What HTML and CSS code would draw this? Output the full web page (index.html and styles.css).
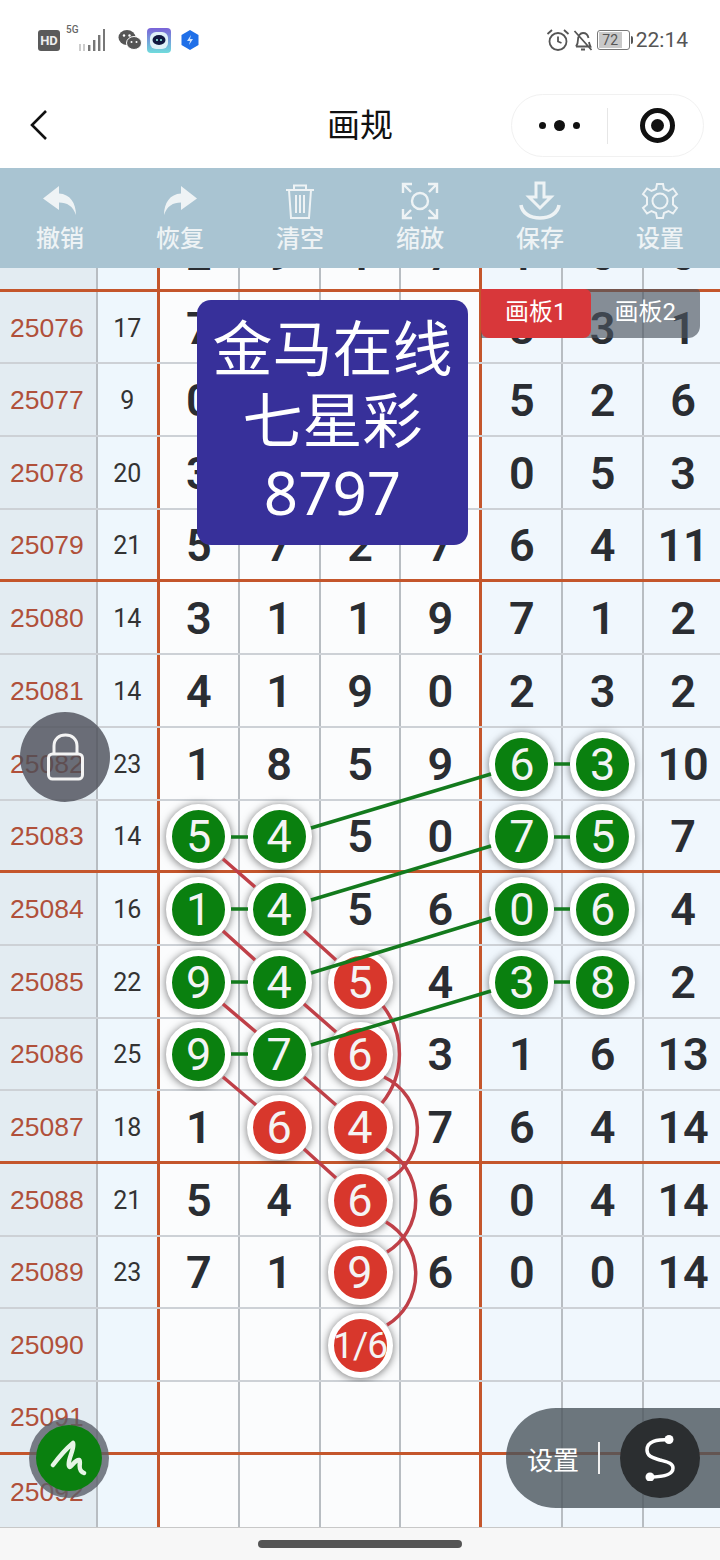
FILE: index.html
```html
<!DOCTYPE html>
<html lang="zh-CN">
<head>
    <meta charset="UTF-8">
    <meta name="viewport" content="width=device-width, initial-scale=1.0">
    <title>画规</title>
    <link rel="stylesheet" href="styles.css">
</head>
<body>
<div class="page">

    <!-- status bar -->
    <div class="status-bar">
        <div class="status-left">
            <span class="hd">HD</span>
            <span class="net">
                <span class="net-label">5G</span>
                <svg width="26" height="24" viewBox="0 0 26 24"><g fill="#777"><rect x="0" y="15" width="2" height="7" fill="#ccc"/><rect x="4" y="15" width="2" height="7" fill="#ccc"/><rect x="9" y="16" width="2.4" height="6"/><rect x="14" y="11" width="2.4" height="11"/><rect x="19" y="6" width="2.4" height="16"/><rect x="24" y="0" width="2" height="22"/></g></svg>
            </span>
            <svg class="wechat" width="24" height="22" viewBox="0 0 24 22"><ellipse cx="9" cy="8.5" rx="8.5" ry="7.5" fill="#555"/><ellipse cx="16" cy="14" rx="7.5" ry="6.5" fill="#555" stroke="#fff"/><circle cx="6" cy="6.5" r="1.2" fill="#fff"/><circle cx="11.500" cy="6.500" r="1.200" fill="#fff"/><circle cx="13.500" cy="13" r="1" fill="#fff"/><circle cx="18.500" cy="13" r="1" fill="#fff"/></svg>
            <svg class="app" width="24" height="25" viewBox="0 0 24 25"><defs><linearGradient id="appbg" x1="0" y1="0" x2="0" y2="1"><stop offset="0" stop-color="#7a62d8"/><stop offset="1" stop-color="#6fdcdc"/></linearGradient></defs><rect width="24" height="25" rx="4" fill="url(#appbg)"/><rect x="3" y="4" width="18" height="17" rx="6" fill="#dff1f8"/><ellipse cx="12" cy="12" rx="6.500" ry="5" fill="#101840"/><circle cx="10" cy="12" r="1" fill="#9fe"/><circle cx="14" cy="12" r="1" fill="#9fe"/></svg>
            <svg class="hex" width="18" height="20" viewBox="0 0 18 20"><path d="M9 0 17.500 5V15L9 20 .5 15V5Z" fill="#1f6fe8"/><path d="M10 5 6 11H9L8 15 12 9H9Z" fill="#cfe4ff"/></svg>
        </div>
        <div class="status-right">
            <svg width="24" height="24" viewBox="0 0 24 24" fill="none" stroke="#555" stroke-width="1.800"><circle cx="12" cy="13.500" r="8.500"/><path d="M12 8.500v5l3.500 1.500M1.500 6 6 2M22.500 6 18 2"/></svg>
            <svg width="22" height="24" viewBox="0 0 22 24" fill="none" stroke="#555" stroke-width="1.800"><path d="M4 18.500c1.500-2 2-3.500 2-7 0-3.500 2-6.500 5-6.500s5 2.500 5.500 5M17 14c.3 2 1 3.300 1.500 4.500H4M9 21.500h4M2.500 3 19.500 22"/></svg>
            <span class="battery"><span class="battery-level">72</span></span>
            <span class="clock">22:14</span>
        </div>
    </div>

    <!-- mini program nav -->
    <div class="nav-bar">
        <svg class="back" width="20" height="32" viewBox="0 0 20 32" fill="none" stroke="#111" stroke-width="2.600"><path d="M17 2 3 16 17 30"/></svg>
        <div class="nav-title">画规</div>
        <div class="capsule">
            <div class="capsule-dots"><i></i><i class="big"></i><i></i></div>
            <div class="capsule-line"></div>
            <div class="capsule-target"><i></i></div>
        </div>
    </div>

    <!-- toolbar -->
    <div class="toolbar">
        <div class="tool">
            <svg width="36" height="32" viewBox="0 0 36 32"><path d="M17 1 1 13.500 17 25V17.500C25 17.500 31 21 34 30 34 18 28 9 17 8.500Z" fill="#eef3f5"/></svg>
            <span>撤销</span>
        </div>
        <div class="tool">
            <svg width="36" height="32" viewBox="0 0 36 32"><path d="M19 1 35 13.500 19 25V17.500C11 17.500 5 21 2 30 2 18 8 9 19 8.500Z" fill="#eef3f5"/></svg>
            <span>恢复</span>
        </div>
        <div class="tool">
            <svg width="36" height="38" viewBox="0 0 36 38" fill="none" stroke="#eef3f5" stroke-width="2"><path d="M4 8H32M12 8V3.500H24V8M7 8 9 36H27L29 8M14 13V31M18 13V31M22 13V31"/></svg>
            <span>清空</span>
        </div>
        <div class="tool">
            <svg width="38" height="38" viewBox="0 0 38 38" fill="none" stroke="#eef3f5" stroke-width="2.400"><circle cx="19" cy="19" r="8"/><path d="M2 11V2H11M2 2 10 10M36 11V2H27M36 2 28 10M2 27V36H11M2 36 10 28M36 27V36H27M36 36 28 28"/></svg>
            <span>缩放</span>
        </div>
        <div class="tool">
            <svg width="42" height="40" viewBox="0 0 42 40" fill="none" stroke="#eef3f5" stroke-width="3"><path d="M17 2H25V16H32L21 27 10 16H17Z"/><path d="M2 24C3 32 11 37 21 37S39 32 40 24" stroke-width="3.600"/></svg>
            <span>保存</span>
        </div>
        <div class="tool">
            <svg width="38" height="38" viewBox="0 0 38 38" fill="none" stroke="#eef3f5" stroke-width="2"><circle cx="19" cy="19" r="7.500"/><path d="M16 2H22L23 7 27.500 9 32 6.500 36 12 32 15.500V22.500L36 26 32 31.500 27.500 29 23 31 22 36H16L15 31 10.500 29 6 31.500 2 26 6 22.500V15.500L2 12 6 6.500 10.500 9 15 7Z"/></svg>
            <span>设置</span>
        </div>
    </div>

    <!-- chart -->
    <div class="chart">
        <div class="rows">
            <div class="row"><div class="period"></div><div class="sum"></div><div class="cell">2</div><div class="cell">9</div><div class="cell">1</div><div class="cell split">7</div><div class="cell blue">1</div><div class="cell blue">5</div><div class="cell blue last">5</div></div>
            <div class="row"><div class="period">25076</div><div class="sum">17</div><div class="cell">7</div><div class="cell">3</div><div class="cell">4</div><div class="cell split">3</div><div class="cell blue">8</div><div class="cell blue">3</div><div class="cell blue last">1</div></div>
            <div class="row"><div class="period">25077</div><div class="sum">9</div><div class="cell">0</div><div class="cell">2</div><div class="cell">4</div><div class="cell split">3</div><div class="cell blue">5</div><div class="cell blue">2</div><div class="cell blue last">6</div></div>
            <div class="row"><div class="period">25078</div><div class="sum">20</div><div class="cell">3</div><div class="cell">8</div><div class="cell">5</div><div class="cell split">4</div><div class="cell blue">0</div><div class="cell blue">5</div><div class="cell blue last">3</div></div>
            <div class="row"><div class="period">25079</div><div class="sum">21</div><div class="cell">5</div><div class="cell">7</div><div class="cell">2</div><div class="cell split">7</div><div class="cell blue">6</div><div class="cell blue">4</div><div class="cell blue last">11</div></div>
            <div class="row"><div class="period">25080</div><div class="sum">14</div><div class="cell">3</div><div class="cell">1</div><div class="cell">1</div><div class="cell split">9</div><div class="cell blue">7</div><div class="cell blue">1</div><div class="cell blue last">2</div></div>
            <div class="row"><div class="period">25081</div><div class="sum">14</div><div class="cell">4</div><div class="cell">1</div><div class="cell">9</div><div class="cell split">0</div><div class="cell blue">2</div><div class="cell blue">3</div><div class="cell blue last">2</div></div>
            <div class="row"><div class="period">25082</div><div class="sum">23</div><div class="cell">1</div><div class="cell">8</div><div class="cell">5</div><div class="cell split">9</div><div class="cell blue"><span class="ball green">6</span></div><div class="cell blue"><span class="ball green">3</span></div><div class="cell blue last">10</div></div>
            <div class="row"><div class="period">25083</div><div class="sum">14</div><div class="cell"><span class="ball green">5</span></div><div class="cell"><span class="ball green">4</span></div><div class="cell">5</div><div class="cell split">0</div><div class="cell blue"><span class="ball green">7</span></div><div class="cell blue"><span class="ball green">5</span></div><div class="cell blue last">7</div></div>
            <div class="row"><div class="period">25084</div><div class="sum">16</div><div class="cell"><span class="ball green">1</span></div><div class="cell"><span class="ball green">4</span></div><div class="cell">5</div><div class="cell split">6</div><div class="cell blue"><span class="ball green">0</span></div><div class="cell blue"><span class="ball green">6</span></div><div class="cell blue last">4</div></div>
            <div class="row"><div class="period">25085</div><div class="sum">22</div><div class="cell"><span class="ball green">9</span></div><div class="cell"><span class="ball green">4</span></div><div class="cell"><span class="ball red">5</span></div><div class="cell split">4</div><div class="cell blue"><span class="ball green">3</span></div><div class="cell blue"><span class="ball green">8</span></div><div class="cell blue last">2</div></div>
            <div class="row"><div class="period">25086</div><div class="sum">25</div><div class="cell"><span class="ball green">9</span></div><div class="cell"><span class="ball green">7</span></div><div class="cell"><span class="ball red">6</span></div><div class="cell split">3</div><div class="cell blue">1</div><div class="cell blue">6</div><div class="cell blue last">13</div></div>
            <div class="row"><div class="period">25087</div><div class="sum">18</div><div class="cell">1</div><div class="cell"><span class="ball red">6</span></div><div class="cell"><span class="ball red">4</span></div><div class="cell split">7</div><div class="cell blue">6</div><div class="cell blue">4</div><div class="cell blue last">14</div></div>
            <div class="row"><div class="period">25088</div><div class="sum">21</div><div class="cell">5</div><div class="cell">4</div><div class="cell"><span class="ball red">6</span></div><div class="cell split">6</div><div class="cell blue">0</div><div class="cell blue">4</div><div class="cell blue last">14</div></div>
            <div class="row"><div class="period">25089</div><div class="sum">23</div><div class="cell">7</div><div class="cell">1</div><div class="cell"><span class="ball red">9</span></div><div class="cell split">6</div><div class="cell blue">0</div><div class="cell blue">0</div><div class="cell blue last">14</div></div>
            <div class="row"><div class="period">25090</div><div class="sum"></div><div class="cell"></div><div class="cell"></div><div class="cell"><span class="ball red small">1/6</span></div><div class="cell split"></div><div class="cell blue"></div><div class="cell blue"></div><div class="cell blue last"></div></div>
            <div class="row"><div class="period">25091</div><div class="sum"></div><div class="cell"></div><div class="cell"></div><div class="cell"></div><div class="cell split"></div><div class="cell blue"></div><div class="cell blue"></div><div class="cell blue last"></div></div>
            <div class="row"><div class="period">25092</div><div class="sum"></div><div class="cell"></div><div class="cell"></div><div class="cell"></div><div class="cell split"></div><div class="cell blue"></div><div class="cell blue"></div><div class="cell blue last"></div></div>
        </div>

        <!-- connecting lines, in page coordinates -->
        <svg class="lines" width="720" height="1259" viewBox="0 268 720 1259" fill="none">
            <g class="red-lines">
                <path d="M223 859 255 887M223 931 255 960M304 931 336 960M223 1004 256 1032M304 1004 336 1032M223 1077 256 1105M304 1077 336 1105M304 1149 336 1178"/>
                <path d="M383 1006A78 78 0 0 1 382 1103"/>
                <path d="M384 1077A58 58 0 0 1 388 1180"/>
                <path d="M386 1149A60 60 0 0 1 387 1252"/>
                <path d="M386 1222A60 60 0 0 1 387 1325"/>
            </g>
            <g class="green-lines">
                <path d="M231 837H248M231 909H248M231 982H248M231 1054H248M554 764H570M554 837H570M554 909H570M554 982H570"/>
                <path d="M311 828 491 774M311 900 491 846M311 973 491 918M311 1045 491 991"/>
            </g>
        </svg>

        <div class="notice">金马在线<br>七星彩<br>8797</div>

        <div class="tabs">
            <div class="tab active">画板1</div>
            <div class="tab">画板2</div>
        </div>

        <div class="lock">
            <svg width="37" height="48" viewBox="0 0 37 48" fill="none" stroke="#f4f4f4" stroke-width="3"><path d="M7 22V13C7 6 12 2 18.500 2S30 6 30 13V22"/><rect x="1.500" y="21" width="34" height="25" rx="4"/></svg>
        </div>

        <div class="pen">
            <div class="pen-inner">
                <svg width="40" height="36" viewBox="0 0 40 36" fill="none" stroke="#e6f5e6" stroke-width="4.500" stroke-linecap="round" stroke-linejoin="round"><path d="M4 25C10 17 18 8 24 3 26 9 18 20 20 26 21 30 26 19 30 20 33 21 27 30 35 33"/></svg>
            </div>
        </div>

        <div class="draw-pill">
            <span>设置</span>
            <div class="pill-line"></div>
            <div class="pill-btn">
                <svg width="36" height="46" viewBox="0 0 36 46" fill="none" stroke="#fff" stroke-width="3.500"><path d="M27 4.500C15 4.500 5 6 5 15 5 22 12 23 18 25 25 27 31 28 31 33 31 40 20 42 8 42"/><circle cx="27" cy="4.500" r="4.500" fill="#fff" stroke="none"/><circle cx="8" cy="42" r="4.500" fill="#fff" stroke="none"/></svg>
            </div>
        </div>
    </div>

    <div class="home-bar"><div class="home-indicator"></div></div>
</div>
</body>
</html>
```
FILE: styles.css
```css
body {
    margin: 0;
    padding: 0;
    background-color: #fff;
    font-family: Roboto, "Noto Sans CJK SC", sans-serif;
}

.page {
    width: 720px;
    height: 1560px;
    display: flex;
    flex-direction: column;
    overflow: hidden;
}

/* status bar */
.status-bar {
    height: 80px;
    padding: 0 32px 0 38px;
    display: flex;
    justify-content: space-between;
    align-items: center;
    color: #555;
}

.status-left,
.status-right {
    display: flex;
    align-items: center;
}

.hd {
    width: 22px;
    height: 21px;
    background-color: #5a5a5a;
    border-radius: 3px;
    color: #eee;
    font-size: 13px;
    font-weight: 700;
    line-height: 21px;
    text-align: center;
}

.net {
    position: relative;
    width: 39px;
    height: 24px;
    margin-left: 6px;
}

.net svg {
    position: absolute;
    right: 0;
    top: 1px;
}

.net-label {
    position: absolute;
    left: 0;
    top: -4px;
    font-size: 10px;
    font-weight: 500;
    color: #666;
}

.wechat {
    margin-left: 13px;
}

.app {
    margin-left: 5px;
}

.hex {
    margin-left: 10px;
}

.status-right svg {
    margin-right: 2px;
}

.battery {
    position: relative;
    width: 31px;
    height: 18px;
    margin-left: 1px;
    border: 1px solid #777;
    border-radius: 3px;
    box-sizing: content-box;
}

.battery::after {
    content: "";
    position: absolute;
    right: -4px;
    top: 5px;
    width: 2px;
    height: 8px;
    background-color: #555;
    border-radius: 0 2px 2px 0;
}

.battery-level {
    display: block;
    width: 23px;
    height: 16px;
    margin: 1px;
    background-color: #c8c8c8;
    font-size: 14px;
    line-height: 16px;
    text-align: center;
    color: #555;
}

.clock {
    margin-left: 6px;
    font-size: 21px;
}

/* nav */
.nav-bar {
    position: relative;
    height: 88px;
    display: flex;
    align-items: center;
    justify-content: center;
}

.back {
    position: absolute;
    left: 29px;
    top: 29px;
}

.nav-title {
    font-size: 33px;
    color: #111;
    margin-top: -3px;
}

.capsule {
    position: absolute;
    left: 511px;
    top: 14px;
    width: 193px;
    height: 63px;
    box-sizing: border-box;
    border: 1px solid #f1f1f1;
    border-radius: 32px;
    display: flex;
    align-items: center;
}

.capsule-dots {
    width: 95px;
    display: flex;
    align-items: center;
    justify-content: center;
    gap: 8px;
}

.capsule-dots i {
    width: 7px;
    height: 7px;
    background-color: #111;
    border-radius: 50%;
}

.capsule-dots i.big {
    width: 11px;
    height: 11px;
}

.capsule-line {
    width: 1px;
    height: 36px;
    background-color: #e6e6e6;
}

.capsule-target {
    width: 35px;
    height: 35px;
    margin-left: 32px;
    box-sizing: border-box;
    border: 5px solid #111;
    border-radius: 50%;
    display: flex;
    align-items: center;
    justify-content: center;
}

.capsule-target i {
    width: 13px;
    height: 13px;
    background-color: #111;
    border-radius: 50%;
}

/* toolbar */
.toolbar {
    height: 100px;
    display: flex;
    background-color: #a9c4d2;
}

.tool {
    width: 120px;
    padding-top: 13px;
    box-sizing: border-box;
    display: flex;
    flex-direction: column;
    align-items: center;
    color: #eef3f5;
    font-size: 24px;
    font-weight: 500;
}

.tool svg {
    height: 40px;
}

.tool span {
    line-height: 34px;
    margin-top: 1px;
}

/* chart */
.chart {
    position: relative;
    flex: none;
    height: 1259px;
    overflow: hidden;
}

.rows {
    margin-top: -49px;
}

.row {
    height: 72.7px;
    box-sizing: border-box;
    display: flex;
    border-bottom: 2px solid #cdd1d6;
}

/* every fourth row closes with the orange line */
.row:nth-child(4n+1) {
    border-bottom: 3px solid #c4562c;
}

.row:last-child {
    border-bottom: none;
}

.period,
.sum,
.cell {
    display: flex;
    align-items: center;
    box-sizing: border-box;
    padding-top: 2px;
}

.period {
    width: 98px;
    padding-left: 10px;
    background-color: #e3ecf2;
    border-right: 2px solid #b8bdc2;
    color: #b0503a;
    font-family: "Liberation Sans", sans-serif;
    font-size: 26.5px;
}

.sum {
    width: 62px;
    justify-content: center;
    background-color: #eef7fd;
    border-right: 3px solid #c4562c;
    color: #333;
    font-size: 25px;
}

.cell {
    width: 81px;
    justify-content: center;
    background-color: #fbfcfd;
    border-right: 2px solid #b8bdc2;
    color: #2a2d32;
    font-size: 45px;
    font-weight: 600;
}

.cell:nth-child(3) {
    width: 80px;
}

.cell.split {
    border-right: 3px solid #c4562c;
}

.cell.blue {
    background-color: #f0f7fd;
}

.cell.last {
    width: 76px;
    padding-left: 2px;
    border-right: none;
}

.ball {
    flex: none;
    width: 65px;
    height: 65px;
    box-sizing: border-box;
    border: 6.5px solid #fff;
    border-radius: 50%;
    display: flex;
    align-items: center;
    justify-content: center;
    box-shadow: 0 1px 8px rgba(0, 0, 0, 0.55);
    color: #f4f4f4;
    font-weight: 400;
    font-size: 45px;
}

.ball.green {
    background-color: #0a800f;
}

.ball.red {
    background-color: #d8372c;
}

.ball.small {
    font-size: 37px;
    letter-spacing: -1px;
}

.lines {
    position: absolute;
    left: 0;
    top: 0;
}

.red-lines {
    stroke: #bf4048;
    stroke-width: 3.500;
}

.green-lines {
    stroke: #137a1d;
    stroke-width: 3.500;
}

/* things lying over the chart */
.notice {
    position: absolute;
    left: 197px;
    top: 32px;
    width: 271px;
    height: 245px;
    box-sizing: border-box;
    padding-top: 12px;
    background-color: #37309a;
    border-radius: 14px;
    color: #fff;
    font-family: "Noto Sans", "Noto Sans CJK SC", sans-serif;
    font-size: 60px;
    line-height: 72px;
    text-align: center;
}

.tabs {
    position: absolute;
    left: 481px;
    top: 21px;
    width: 219px;
    height: 49px;
    display: flex;
    background-color: rgba(75, 85, 95, 0.65);
    border-radius: 0 4px 12px 0;
}

.tab {
    width: 110px;
    color: #fff;
    font-size: 24px;
    line-height: 46px;
    text-align: center;
}

.tab.active {
    background-color: #d8373a;
    border-radius: 0 6px 8px 8px;
}

.lock {
    position: absolute;
    left: 20px;
    top: 444px;
    width: 90px;
    height: 90px;
    background-color: rgba(75, 78, 88, 0.8);
    border-radius: 50%;
    display: flex;
    align-items: center;
    justify-content: center;
}

.pen {
    position: absolute;
    left: 29px;
    top: 1150px;
    width: 80px;
    height: 80px;
    background-color: rgba(90, 95, 105, 0.8);
    border-radius: 50%;
    display: flex;
    align-items: center;
    justify-content: center;
}

.pen-inner {
    width: 66px;
    height: 66px;
    background-color: #0a800f;
    border-radius: 50%;
    display: flex;
    align-items: center;
    justify-content: center;
}

.draw-pill {
    position: absolute;
    left: 506px;
    top: 1140px;
    width: 214px;
    height: 100px;
    padding-left: 21px;
    box-sizing: border-box;
    background-color: rgba(75, 85, 92, 0.8);
    border-radius: 50px 0 0 50px;
    display: flex;
    align-items: center;
    color: #fff;
    font-size: 26px;
}

.pill-line {
    width: 2px;
    height: 32px;
    margin-left: 19px;
    background-color: #f0f0f0;
}

.pill-btn {
    width: 80px;
    height: 80px;
    margin-left: 20px;
    background-color: #2b2e30;
    border-radius: 50%;
    display: flex;
    align-items: center;
    justify-content: center;
}

.home-bar {
    flex: 1;
    background-color: #f7f7f7;
    border-top: 1px solid #c8c8c8;
    display: flex;
    justify-content: center;
}

.home-indicator {
    width: 204px;
    height: 8px;
    margin-top: 12px;
    background-color: #555;
    border-radius: 4px;
}
```
